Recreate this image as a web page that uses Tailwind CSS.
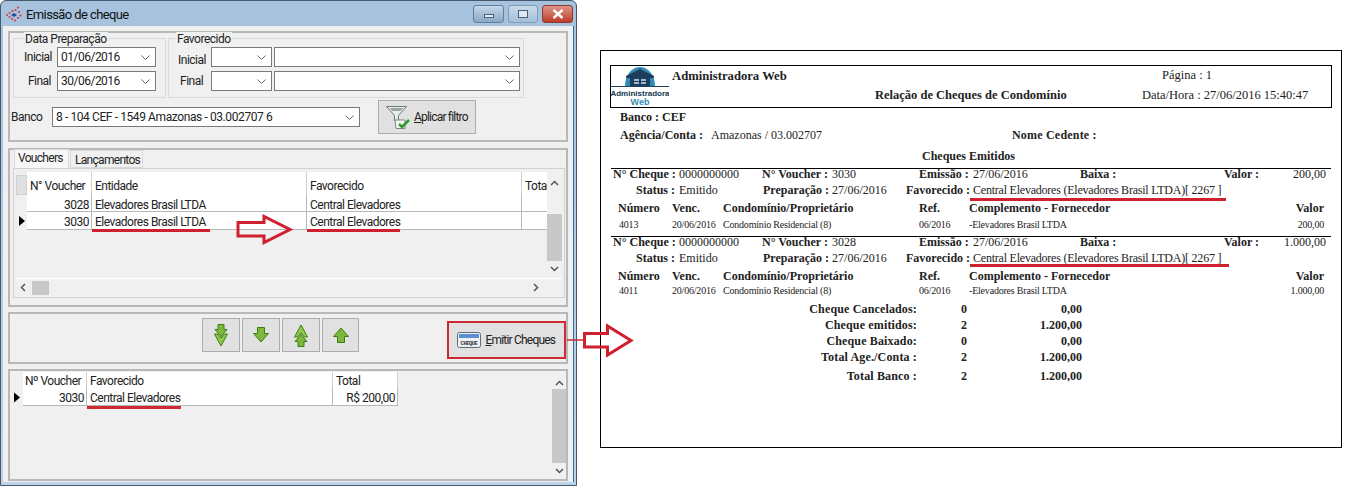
<!DOCTYPE html>
<html lang="pt-BR">
<head>
<meta charset="UTF-8">
<title>Emissão de cheque</title>
<script src="https://cdn.jsdelivr.net/npm/@tailwindcss/browser@4"></script>
</head>
<body class="bg-white">
<div class="relative flex w-[1348px] h-[486px] overflow-hidden bg-white">

  <!-- Window -->
  <div class="flex flex-col w-[577px] h-[486px] shrink-0 rounded-t-[6px] border border-[#44596e] bg-gradient-to-b from-[#a6c2dd] to-[#bcd3e9] text-[12px] tracking-[-0.5px] whitespace-nowrap text-[#222] font-['Roboto',sans-serif]">
    <!-- Title bar -->
    <div class="flex items-center h-[25px] shrink-0 pl-[5px] pr-[3px]">
      <svg class="w-[16px] h-[16px]" viewBox="0 0 16 16">
        <g fill="#d8343c">
          <circle cx="12" cy="1.5" r="1"/><circle cx="9.5" cy="4" r="1"/><circle cx="6.5" cy="5" r="1"/><circle cx="3.5" cy="7" r="1"/><circle cx="1" cy="9" r="1"/>
          <circle cx="3.5" cy="11" r="1"/><circle cx="6" cy="13" r="1"/><circle cx="9" cy="14.5" r="1"/><circle cx="12" cy="12" r="1"/><circle cx="14.5" cy="9.5" r="1"/><circle cx="13" cy="6" r="1"/>
        </g>
        <path d="M5 9l3-2 3 2-3 2z" fill="#2b4a9a"/>
      </svg>
      <span class="ml-[4px] mt-[2px] text-[13px] tracking-[-0.6px] text-[#111]">Emissão de cheque</span>
      <div class="ml-auto mt-[1px] flex gap-[4px]">
        <div class="flex items-center justify-center w-[31px] h-[18px] rounded-[3px] border border-[#5f7f9e] bg-gradient-to-b from-[#c4d6e8] to-[#8aa9c6]">
          <div class="w-[10px] h-[4px] mt-[4px] bg-[#e8eef4] border border-[#47607a]"></div>
        </div>
        <div class="flex items-center justify-center w-[30px] h-[18px] rounded-[3px] border border-[#7f9cb8] bg-gradient-to-b from-[#c9dbec] to-[#a3bfd9]">
          <div class="w-[10px] h-[8px] bg-[#dde8f2] border border-[#47607a]"></div>
        </div>
        <div class="flex items-center justify-center w-[31px] h-[18px] rounded-[3px] border border-[#8a3b30] bg-gradient-to-b from-[#dd9488] to-[#bd3a2a]">
          <svg class="w-[12px] h-[10px]" viewBox="0 0 12 10"><path d="M1.5 1l9 8M10.500 1l-9 8" stroke="#fff" stroke-width="2.400"/></svg>
        </div>
      </div>
    </div>

    <!-- Client area -->
    <div class="flex flex-col flex-1 mx-[2px] mb-[3px] pl-[5px] pr-[5px] pt-[5px] bg-[#f0f0f0] border-r border-[#2f6f9a]">

      <!-- Filters -->
      <div class="h-[111px] shrink-0 border-2 border-[#b8b8b8]">
        <div class="flex gap-[2px] pl-[3px] pt-[5px]">
          <div class="relative w-[153px] h-[60px] border border-[#d9d9d9] pt-[8px]">
            <span class="absolute left-[10px] top-[-7px] px-[1px] leading-[14px] bg-[#f0f0f0]">Data Preparação</span>
            <div class="flex items-center h-[20px]">
              <span class="w-[43px] pr-[5px] text-right">Inicial</span>
              <div class="flex items-center justify-between w-[99px] h-[20px] pl-[3px] pr-[5px] bg-white border border-[#7a7a7a]">
                <span>01/06/2016</span>
                <svg class="w-[9px] h-[5px]" viewBox="0 0 9 5"><path d="M.5.500l4 4 4-4" fill="none" stroke="#666"/></svg>
              </div>
            </div>
            <div class="flex items-center h-[20px] mt-[4px]">
              <span class="w-[43px] pr-[6px] text-right">Final</span>
              <div class="flex items-center justify-between w-[99px] h-[20px] pl-[3px] pr-[5px] bg-white border border-[#7a7a7a]">
                <span>30/06/2016</span>
                <svg class="w-[9px] h-[5px]" viewBox="0 0 9 5"><path d="M.5.500l4 4 4-4" fill="none" stroke="#666"/></svg>
              </div>
            </div>
          </div>
          <div class="relative w-[356px] h-[60px] border border-[#d9d9d9] pt-[8px]">
            <span class="absolute left-[7px] top-[-7px] px-[1px] leading-[14px] bg-[#f0f0f0]">Favorecido</span>
            <div class="flex items-center h-[20px]">
              <span class="w-[42px] pl-[9px] pt-[5px]">Inicial</span>
              <div class="flex items-center justify-end w-[61px] h-[20px] pr-[5px] bg-white border border-[#7a7a7a]">
                <svg class="w-[9px] h-[5px]" viewBox="0 0 9 5"><path d="M.5.500l4 4 4-4" fill="none" stroke="#666"/></svg>
              </div>
              <div class="flex items-center justify-end w-[246px] h-[20px] ml-[2px] pr-[5px] bg-white border border-[#7a7a7a]">
                <svg class="w-[9px] h-[5px]" viewBox="0 0 9 5"><path d="M.5.500l4 4 4-4" fill="none" stroke="#666"/></svg>
              </div>
            </div>
            <div class="flex items-center h-[20px] mt-[4px]">
              <span class="w-[42px] pl-[11px]">Final</span>
              <div class="flex items-center justify-end w-[61px] h-[20px] pr-[5px] bg-white border border-[#7a7a7a]">
                <svg class="w-[9px] h-[5px]" viewBox="0 0 9 5"><path d="M.5.500l4 4 4-4" fill="none" stroke="#666"/></svg>
              </div>
              <div class="flex items-center justify-end w-[246px] h-[20px] ml-[2px] pr-[5px] bg-white border border-[#7a7a7a]">
                <svg class="w-[9px] h-[5px]" viewBox="0 0 9 5"><path d="M.5.500l4 4 4-4" fill="none" stroke="#666"/></svg>
              </div>
            </div>
          </div>
        </div>
        <div class="flex items-center h-[34px] mt-[2px]">
          <span class="w-[42px] pl-[1px]">Banco</span>
          <div class="flex items-center justify-between w-[308px] h-[20px] pl-[3px] pr-[5px] bg-white border border-[#7a7a7a]">
            <span class="tracking-[-0.4px]">8 - 104 CEF - 1549 Amazonas - 03.002707 6</span>
            <svg class="w-[9px] h-[5px]" viewBox="0 0 9 5"><path d="M.5.500l4 4 4-4" fill="none" stroke="#666"/></svg>
          </div>
          <div class="flex items-center w-[98px] h-[34px] ml-[18px] pl-[7px] bg-[#e1e1e1] border border-[#adadad]">
            <svg class="w-[26px] h-[25px] shrink-0" viewBox="0 0 26 25">
              <path d="M.5 1.500h20l-8 9v5h-4v-5z" fill="#e8ecec" stroke="#6f7a7a"/>
              <path d="M3.500 3h14l-3 3h-8z" fill="#9aa5a5"/>
              <path d="M9 15h10v8.500H10z" fill="#f6f8f8" stroke="#7a8585"/>
              <path d="M13 19l3 3 7-7" fill="none" stroke="#2f9a2a" stroke-width="2.500"/>
            </svg>
            <span class="ml-[2px] tracking-[-0.8px]"><u>A</u>plicar filtro</span>
          </div>
        </div>
      </div>

      <!-- Tabs and voucher grid -->
      <div class="h-[159px] shrink-0 mt-[6px] border-2 border-[#b8b8b8]">
        <div class="flex items-end h-[18px] pl-[4px] tracking-[-0.7px]">
          <div class="w-[55px] h-[19px] pl-[3px] leading-[17px] bg-[#f7f7f7] border border-b-0 border-[#d9d9d9]">Vouchers</div>
          <div class="w-[73px] h-[18px] ml-[1px] pl-[4px] leading-[19px] bg-[#f0f0f0] border border-[#d9d9d9]">Lançamentos</div>
        </div>
        <div class="w-[552px] h-[130px] ml-[3px] pl-[2px] pt-[3px] border border-[#d0d0d0]">
          <div class="w-[546px] h-[124px] flex flex-col">
            <div class="flex h-[106px]">
              <div class="relative w-[531px]">
                <div class="flex h-[23px]">
                  <div class="w-[11px] mt-[3px] bg-[#e0e0e0] border border-[#d0d0d0]"></div>
                  <div class="w-[65px] pl-[3px] pt-[5px] bg-white border-r border-[#d0d0d0]">N° Voucher</div>
                  <div class="w-[215px] pl-[3px] pt-[5px] bg-white border-r border-[#d0d0d0]">Entidade</div>
                  <div class="w-[215px] pl-[3px] pt-[5px] bg-white border-r border-[#d0d0d0]">Favorecido</div>
                  <div class="w-[25px] pl-[3px] pt-[5px] bg-white overflow-hidden">Tota</div>
                </div>
                <div class="flex h-[17px] leading-[21px]">
                  <div class="w-[11px]"></div>
                  <div class="w-[65px] pr-[2px] text-right bg-white border-r border-b border-[#b8b8b8]">3028</div>
                  <div class="w-[215px] pl-[3px] bg-white border-r border-b border-[#b8b8b8]">Elevadores Brasil LTDA</div>
                  <div class="w-[215px] pl-[3px] bg-white border-r border-b border-[#b8b8b8]">Central Elevadores</div>
                  <div class="w-[25px] bg-white border-b border-[#b8b8b8]"></div>
                </div>
                <div class="flex h-[18px] leading-[21px]">
                  <div class="flex items-center w-[11px] pl-[3px]">
                    <svg class="w-[6px] h-[10px]" viewBox="0 0 6 10"><path d="M0 0l6 5-6 5z" fill="#000"/></svg>
                  </div>
                  <div class="w-[65px] pr-[2px] text-right bg-white border-r border-b border-[#b8b8b8]">3030</div>
                  <div class="relative w-[215px] pl-[3px] bg-white border-r border-b border-[#b8b8b8]">
                    Elevadores Brasil LTDA
                    <div class="absolute left-0 top-[17px] w-[118px] h-[3px] bg-[#d0202f]"></div>
                  </div>
                  <div class="relative w-[215px] pl-[3px] bg-white border-r border-b border-[#b8b8b8]">
                    Central Elevadores
                    <div class="absolute left-0 top-[17px] w-[93px] h-[3px] bg-[#d0202f]"></div>
                  </div>
                  <div class="w-[25px] bg-white border-b border-[#b8b8b8]"></div>
                </div>
              </div>
              <div class="flex flex-col items-center w-[15px] bg-[#f0f0f0]">
                <svg class="w-[9px] h-[6px] mt-[8px]" viewBox="0 0 9 6"><path d="M1 5l3.500-3.500L8 5" fill="none" stroke="#555" stroke-width="1.500"/></svg>
                <div class="w-full h-[47px] mt-[28px] bg-[#c8c8c8]"></div>
                <svg class="w-[9px] h-[6px] mt-[5px]" viewBox="0 0 9 6"><path d="M1 1l3.500 3.500L8 1" fill="none" stroke="#555" stroke-width="1.500"/></svg>
              </div>
            </div>
            <div class="flex items-center h-[18px] pl-[4px] pr-[23px] border-t border-white">
              <svg class="w-[6px] h-[9px]" viewBox="0 0 6 9"><path d="M5 1L1.500 4.500 5 8" fill="none" stroke="#555" stroke-width="1.500"/></svg>
              <div class="w-[17px] h-[14px] ml-[6px] bg-[#c8c8c8]"></div>
              <svg class="w-[6px] h-[9px] ml-auto" viewBox="0 0 6 9"><path d="M1 1l3.500 3.500L1 8" fill="none" stroke="#555" stroke-width="1.500"/></svg>
            </div>
          </div>
        </div>
      </div>

      <!-- Move buttons -->
      <div class="flex items-start h-[52px] shrink-0 mt-[5px] pl-[192px] pt-[4px] border-2 border-[#b8b8b8]">
        <div class="flex items-center justify-center w-[38px] h-[34px] bg-[#e1e1e1] border border-[#adadad]">
          <svg class="w-[16px] h-[23px]" viewBox="0 0 16 23"><path d="M5 .500h6v5h3l-6 7-6-7h3z" fill="#7cb83e" stroke="#3f7d14"/><path d="M1.500 10l3 0 3.500 4 3.500-4h3L8 22z" fill="#8cc84e" stroke="#3f7d14"/></svg>
        </div>
        <div class="flex items-center justify-center w-[38px] h-[34px] ml-[2px] bg-[#e1e1e1] border border-[#adadad]">
          <svg class="w-[16px] h-[16px]" viewBox="0 0 16 16"><path d="M4.500.500h7v6h4L8 15 .500 6.500h4z" fill="#7cb83e" stroke="#3f7d14"/></svg>
        </div>
        <div class="flex items-center justify-center w-[38px] h-[34px] ml-[2px] bg-[#e1e1e1] border border-[#adadad]">
          <svg class="w-[16px] h-[23px]" viewBox="0 0 16 23"><path d="M5 22.500h6v-5h3l-6-7-6 7h3z" fill="#7cb83e" stroke="#3f7d14"/><path d="M1.500 13l3 0 3.500-4 3.500 4h3L8 1z" fill="#8cc84e" stroke="#3f7d14"/></svg>
        </div>
        <div class="flex items-center justify-center w-[38px] h-[34px] ml-[2px] bg-[#e1e1e1] border border-[#adadad]">
          <svg class="w-[16px] h-[16px]" viewBox="0 0 16 16"><path d="M4.500 15.500h7v-6h4L8 1 .500 9.500h4z" fill="#7cb83e" stroke="#3f7d14"/></svg>
        </div>
        <div class="flex items-center w-[119px] h-[38px] ml-[88px] mt-[3px] pl-[8px] bg-[#e1e1e1] border-2 border-[#cf2a34]">
          <svg class="w-[24px] h-[16px] shrink-0" viewBox="0 0 24 16">
            <rect x=".5" y=".5" width="23" height="15" rx="2" fill="#eef1f4" stroke="#5f6b78"/>
            <rect x="2" y="2" width="20" height="4" fill="#5d8fd0"/>
            <text x="12" y="13" text-anchor="middle" font-size="5.500" font-weight="700" fill="#333" font-family="Liberation Mono">CHEQUE</text>
          </svg>
          <span class="ml-[4px] tracking-[-0.8px]"><u>E</u>mitir Cheques</span>
        </div>
      </div>

      <!-- Selected vouchers -->
      <div class="flex h-[112px] shrink-0 mt-[5px] pl-[1px] pt-[1px] border-2 border-[#b8b8b8]">
        <div class="w-[387px]">
          <div class="flex h-[16px] leading-[18px]">
            <div class="w-[12px]"></div>
            <div class="w-[64px] pl-[2px] bg-white border-r border-[#d0d0d0]">Nº Voucher</div>
            <div class="w-[246px] pl-[3px] bg-white border-r border-[#d0d0d0]">Favorecido</div>
            <div class="w-[65px] pl-[3px] bg-white border-r border-[#d0d0d0]">Total</div>
          </div>
          <div class="flex h-[18px] leading-[21px]">
            <div class="flex items-center w-[12px] pl-[3px]">
              <svg class="w-[6px] h-[11px]" viewBox="0 0 6 10"><path d="M0 0l6 5-6 5z" fill="#000"/></svg>
            </div>
            <div class="w-[64px] pr-[2px] text-right bg-white border-r border-b border-[#b8b8b8]">3030</div>
            <div class="relative w-[246px] pl-[3px] bg-white border-r border-b border-[#b8b8b8]">
              Central Elevadores
              <div class="absolute left-0 top-[18px] w-[94px] h-[3px] bg-[#cf2a34]"></div>
            </div>
            <div class="w-[65px] pr-[2px] text-right bg-white border-r border-b border-[#b8b8b8]">R$ 200,00</div>
          </div>
        </div>
        <div class="flex flex-col items-center w-[15px] ml-[154px]">
          <svg class="w-[9px] h-[6px] mt-[8px]" viewBox="0 0 9 6"><path d="M1 5l3.500-3.500L8 5" fill="none" stroke="#555" stroke-width="1.500"/></svg>
          <div class="w-full h-[74px] mt-[3px] bg-[#c8c8c8]"></div>
          <svg class="w-[9px] h-[6px] mt-[5px]" viewBox="0 0 9 6"><path d="M1 1l3.500 3.500L8 1" fill="none" stroke="#555" stroke-width="1.500"/></svg>
        </div>
      </div>
    </div>
  </div>

  <!-- Report -->
  <div class="w-[742px] h-[398px] shrink-0 ml-[23px] mt-[50px] pt-[14px] pl-[9px] bg-white border border-black whitespace-nowrap text-[12px] text-[#222] font-['Liberation_Serif',serif]">
    <div class="flex w-[722px] h-[43px] border border-black">
      <div class="w-[61px] shrink-0">
        <svg class="w-[58px] h-[41px]" viewBox="0 0 58 41">
          <path d="M14 20a15 19 0 1 1 30 0z" fill="#2f8bb5"/>
          <path d="M15 10l14-7 14 7v2H15z" fill="#1e3f5c"/>
          <rect x="19" y="11" width="20" height="9" fill="#1e3f5c"/>
          <path d="M23 14h5M30 14h5M23 17h5M30 17h5" stroke="#cfe3ee" stroke-width="1.500"/>
          <path d="M0 20.500h58" stroke="#1e3f5c"/>
          <text x="29" y="29.500" text-anchor="middle" font-size="8" font-weight="700" fill="#12384f" font-family="Liberation Sans">Administradora</text>
          <text x="29" y="39" text-anchor="middle" font-size="9" font-weight="700" fill="#2f8bb5" font-family="Liberation Sans">Web</text>
        </svg>
      </div>
      <div class="w-[203px] pt-[3px] text-[12.66px] font-bold leading-[15px]">Administradora Web</div>
      <div class="w-[267px] pt-[22px] text-[12.5px] font-bold leading-[15px]">Relação de Cheques de Condomínio</div>
      <div class="flex flex-col text-[12.5px]">
        <span class="pl-[20px] pt-[2px] leading-[15px]">Página : 1</span>
        <span class="pt-[5px] leading-[15px]">Data/Hora : 27/06/2016 15:40:47</span>
      </div>
    </div>

    <div class="pl-[10px] pt-[2px] font-bold leading-[14px]">Banco : CEF</div>
    <div class="flex pl-[10px] pt-[4px] leading-[14px]">
      <span class="w-[91px] font-bold">Agência/Conta :</span>
      <span class="w-[301px]">Amazonas / 03.002707</span>
      <span class="font-bold tracking-[0.2px]">Nome Cedente :</span>
    </div>
    <div class="pl-[312px] pt-[7px] font-bold leading-[14px]">Cheques Emitidos</div>

    <!-- Cheque 3030 -->
    <div class="w-[720px] h-[68px] mt-[5px] ml-[1px] border-t border-black">
      <div class="grid grid-cols-[66px_83px_70px_87px_54px_107px_144px_102px] h-[11px] pl-[2px] leading-[11px]">
        <b>N° Cheque :</b><span>0000000000</span><b>N° Voucher :</b><span>3030</span><b>Emissão :</b><span>27/06/2016</span><b>Baixa :</b>
        <span class="flex justify-between"><b>Valor :</b><span>200,00</span></span>
      </div>
      <div class="grid grid-cols-[43px_84px_143px_67px_1fr] h-[14px] mt-[3px] pl-[25px] leading-[14px]">
        <b>Status :</b><span>Emitido</span><span><b>Preparação :</b> 27/06/2016</span><b>Favorecido :</b>
        <span class="relative tracking-[-0.22px]">Central Elevadores (Elevadores Brasil LTDA)[ 2267 ]
          <span class="absolute left-[-3px] top-[15px] w-[256px] h-[3px] bg-[#d0202f]"></span>
        </span>
      </div>
      <div class="grid grid-cols-[54px_51px_196px_50px_355px] h-[14px] mt-[4px] pl-[7px] font-bold leading-[14px]">
        <span>Número</span><span>Venc.</span><span>Condomínio/Proprietário</span><span>Ref.</span>
        <span class="flex justify-between"><span>Complemento - Fornecedor</span><span>Valor</span></span>
      </div>
      <div class="grid grid-cols-[54px_51px_196px_50px_355px] h-[12px] mt-[4px] pl-[7px] text-[10px] tracking-[-0.2px] leading-[12px]">
        <span class="pl-[1px]">4013</span><span>20/06/2016</span><span>Condomínio Residencial (8)</span><span>06/2016</span>
        <span class="flex justify-between"><span>-Elevadores Brasil LTDA</span><span>200,00</span></span>
      </div>
    </div>

    <!-- Cheque 3028 -->
    <div class="w-[720px] h-[65px] ml-[1px] border-t border-black">
      <div class="grid grid-cols-[66px_83px_70px_87px_54px_107px_144px_102px] h-[11px] pl-[2px] leading-[11px]">
        <b>N° Cheque :</b><span>0000000000</span><b>N° Voucher :</b><span>3028</span><b>Emissão :</b><span>27/06/2016</span><b>Baixa :</b>
        <span class="flex justify-between"><b>Valor :</b><span>1.000,00</span></span>
      </div>
      <div class="grid grid-cols-[43px_84px_143px_67px_1fr] h-[14px] mt-[3px] pl-[25px] leading-[14px]">
        <b>Status :</b><span>Emitido</span><span><b>Preparação :</b> 27/06/2016</span><b>Favorecido :</b>
        <span class="relative tracking-[-0.22px]">Central Elevadores (Elevadores Brasil LTDA)[ 2267 ]
          <span class="absolute left-[-3px] top-[13px] w-[259px] h-[3px] bg-[#d0202f]"></span>
        </span>
      </div>
      <div class="grid grid-cols-[54px_51px_196px_50px_355px] h-[14px] mt-[4px] pl-[7px] font-bold leading-[14px]">
        <span>Número</span><span>Venc.</span><span>Condomínio/Proprietário</span><span>Ref.</span>
        <span class="flex justify-between"><span>Complemento - Fornecedor</span><span>Valor</span></span>
      </div>
      <div class="grid grid-cols-[54px_51px_196px_50px_355px] h-[12px] mt-[2px] pl-[7px] text-[10px] tracking-[-0.2px] leading-[12px]">
        <span class="pl-[1px]">4011</span><span>20/06/2016</span><span>Condomínio Residencial (8)</span><span>06/2016</span>
        <span class="flex justify-between"><span>-Elevadores Brasil LTDA</span><span>1.000,00</span></span>
      </div>
    </div>

    <!-- Totals -->
    <div class="grid grid-cols-[116px_94px_71px] auto-rows-[16px] ml-[191px] font-bold leading-[16px]">
      <span class="text-right tracking-[0.15px]">Cheque Cancelados:</span><span class="text-center">0</span><span class="text-right">0,00</span>
      <span class="text-right tracking-[0.15px]">Cheque emitidos:</span><span class="text-center">2</span><span class="text-right">1.200,00</span>
      <span class="text-right tracking-[0.15px]">Cheque Baixado:</span><span class="text-center">0</span><span class="text-right">0,00</span>
      <span class="text-right tracking-[0.15px]">Total Age./Conta :</span><span class="text-center">2</span><span class="text-right">1.200,00</span>
    </div>
    <div class="grid grid-cols-[116px_94px_71px] mt-[3px] ml-[191px] font-bold leading-[16px]">
      <span class="text-right tracking-[0.15px]">Total Banco :</span><span class="text-center">2</span><span class="text-right">1.200,00</span>
    </div>
  </div>

  <!-- Red annotation arrows -->
  <svg class="absolute left-[236px] top-[214px] w-[58px] h-[31px]" viewBox="0 0 58 31">
    <path d="M2 8.500h26V2.500L54 15.500 28 28.500V22H2z" fill="none" stroke="#d0202f" stroke-width="3"/>
  </svg>
  <svg class="absolute left-[566px] top-[322px] w-[70px] h-[37px]" viewBox="0 0 70 37">
    <path d="M1 18h17" stroke="#cf2a34" stroke-width="1.500"/>
    <path d="M18.500 11.500h23V4L65 18.500 41.500 33v-8h-23z" fill="none" stroke="#d0202f" stroke-width="3"/>
  </svg>
</div>
</body>
</html>
